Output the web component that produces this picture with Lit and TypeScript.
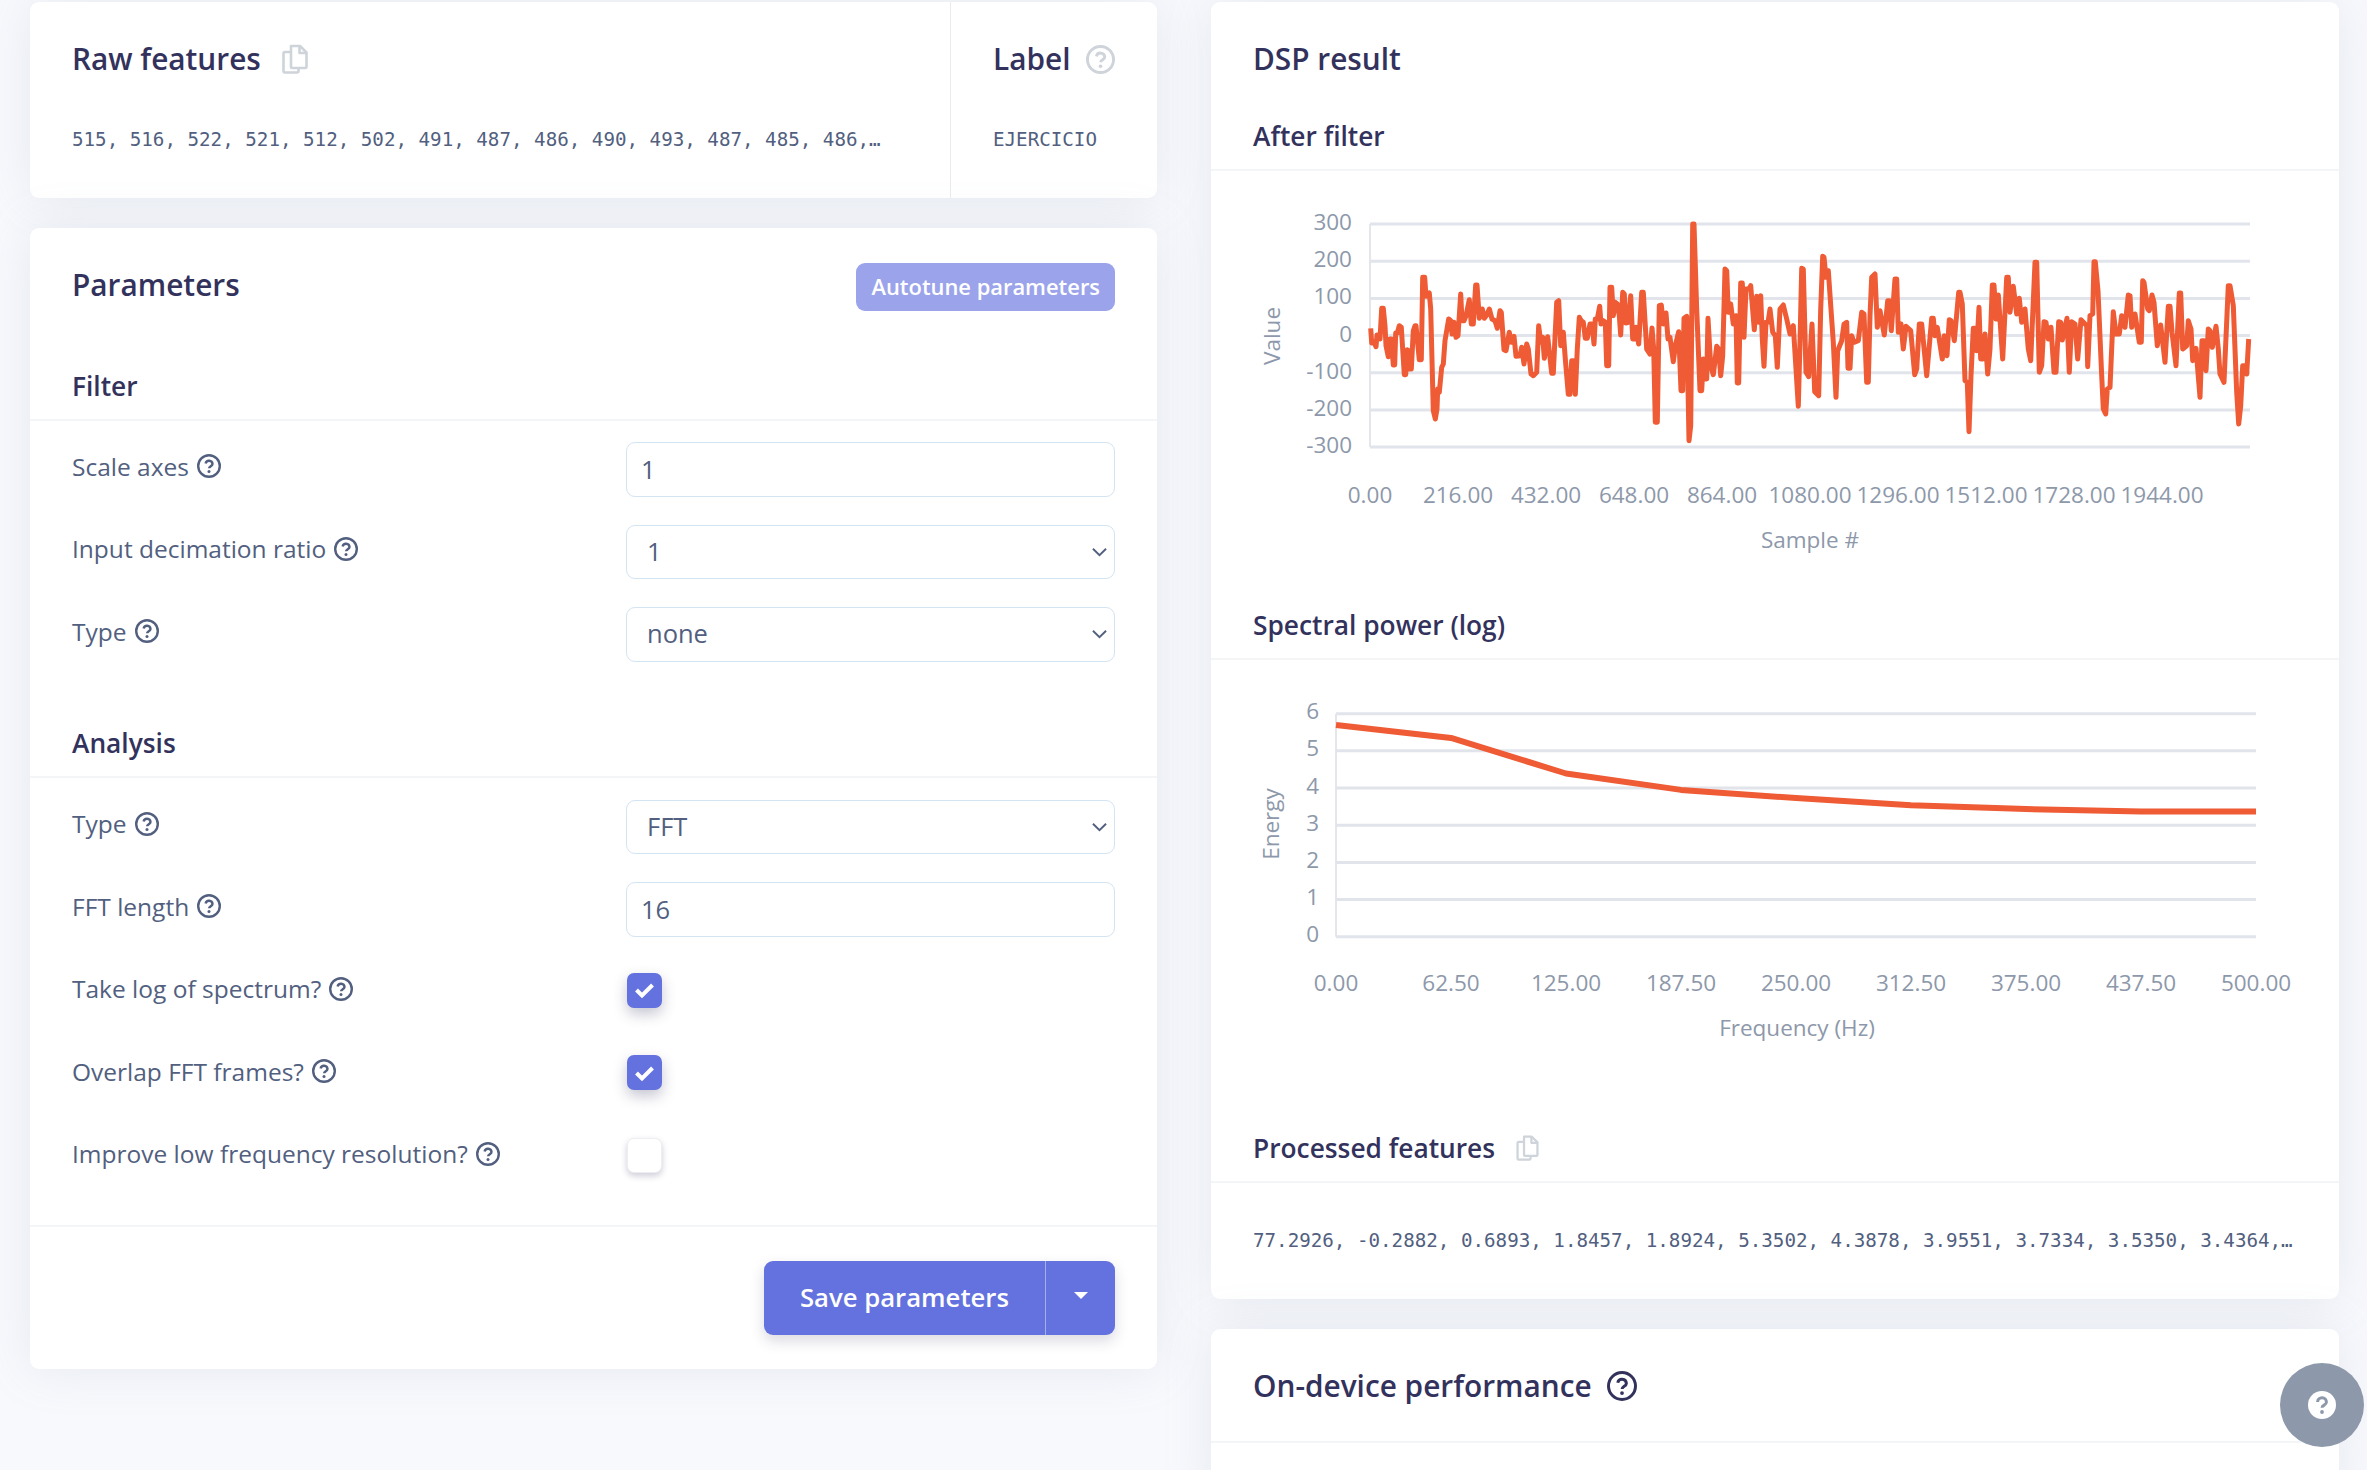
import { LitElement, html, css, svg } from "lit";
import { customElement } from "lit/decorators.js";

// traced off the reference, in page px relative to the 3x crops
const LEFT_TRACE = [
  92,358,95,402,102,398,108,413,111,378,118,378,120,390,125,298,130,298,135,350,138,410,145,443,150,390,154,390,160,468,164,468,167,372,172,372,178,350,184,355,193,497,197,497,202,422,206,425,210,480,214,480,220,365,225,350,228,350,238,452,244,452,248,205,254,205,258,262,268,252,272,300,280,605,286,630,291,600,293,540,298,550,305,475,310,465,315,395,326,330,332,335,336,375,342,340,348,385,354,380,362,255,366,335,372,335,378,320,388,272,394,345,400,345,407,228,411,228,418,328,427,300,433,328,440,318,448,300,456,330,465,335,472,358,480,305,484,310,492,422,498,425,508,370,514,400,522,382,528,442,540,440,545,415,552,465,560,405,565,420,573,495,580,500,590,490,596,350,602,400,608,385,613,448,623,383,635,493,640,493,650,280,656,275,662,410,670,370,676,450,685,556,690,556,695,455,700,455,706,556,712,420,718,325,724,335,730,340,736,388,742,388,750,345,756,345,762,405,766,330,772,330,779,292,783,345,790,335,796,340,800,470,806,470,810,235,815,235,820,320,826,280,832,285,838,320,842,378,848,250,853,255,857,342,865,340,872,260,878,390,886,390,888,355,896,405,905,250,910,250,920,420,930,435,936,357,941,420,946,640,952,640,958,290,964,288,970,345,978,312,984,390,990,385,1000,458,1007,405,1016,368,1023,545,1028,545,1032,328,1040,322,1047,695,1052,650,1058,45,1062,45,1070,300,1080,545,1085,545,1090,450,1096,510,1100,510,1104,328,1112,470,1120,497,1130,412,1136,420,1142,500,1148,440,1155,180,1160,185,1165,310,1172,285,1180,345,1188,320,1192,522,1196,522,1202,222,1207,222,1212,385,1218,240,1226,240,1232,230,1243,362,1250,262,1256,340,1262,260,1267,390,1272,472,1278,340,1284,340,1290,300,1298,370,1306,380,1312,475,1320,300,1330,288,1340,330,1350,375,1360,350,1375,592,1380,400,1385,178,1390,180,1398,490,1406,503,1416,345,1424,548,1436,560,1442,300,
];
const RIGHT_TRACE = [
  8,142,12,145,18,205,25,185,40,400,48,565,53,425,65,395,72,345,80,340,84,478,90,478,95,380,102,400,115,395,125,310,132,315,140,520,145,520,150,320,155,205,165,195,172,355,180,305,193,378,203,275,208,275,214,365,225,210,230,210,235,370,243,345,250,420,258,352,272,365,284,497,290,480,298,345,305,345,320,500,335,328,340,328,345,380,352,355,367,450,373,380,381,440,388,332,393,335,403,395,416,250,420,250,427,285,435,515,442,520,447,668,453,500,460,358,465,358,470,425,477,295,482,450,488,450,495,375,503,495,510,420,517,228,522,228,528,330,535,258,548,450,560,205,565,205,570,310,580,232,590,315,598,268,605,340,615,300,625,420,632,455,645,160,650,160,658,490,665,470,672,338,678,340,685,390,693,355,702,490,708,490,716,338,722,340,727,393,741,328,748,490,755,338,765,345,773,450,783,332,800,350,803,473,810,320,818,315,822,158,826,158,834,245,845,500,850,600,857,615,862,540,870,535,880,308,888,375,898,375,905,320,915,355,925,258,930,260,935,355,945,315,958,400,964,400,968,215,972,220,983,300,988,305,996,258,1002,280,1012,410,1022,348,1035,460,1045,292,1050,292,1056,370,1068,470,1078,252,1082,252,1088,420,1100,410,1105,335,1113,360,1118,455,1128,418,1140,565,1146,395,1152,395,1158,485,1165,360,1170,365,1177,415,1188,352,1195,420,1200,495,1212,520,1225,230,1230,230,1240,290,1250,550,1256,645,1262,590,1268,470,1273,470,1280,495,1286,390,
];

const CARD_X = 1211;

function toPoints(trace: number[], originX: number, originY: number) {
  const out: string[] = [];
  for (let i = 0; i < trace.length; i += 2) {
    out.push(`${(originX + trace[i] / 3 - CARD_X).toFixed(1)},${(originY + trace[i + 1] / 3).toFixed(1)}`);
  }
  return out.join(" ");
}

const filterLine =
  toPoints(LEFT_TRACE, 1340, 210 - 171) + " " + toPoints(RIGHT_TRACE, 1820, 210 - 171);

const helpIcon = (cls = "") => html`<svg class="help ${cls}" viewBox="0 0 24 24" fill="none" stroke="currentColor">
  <circle cx="12" cy="12" r="10.8" stroke-width="2.4"></circle>
  <path d="M8.6 9.4a3.5 3.5 0 0 1 6.9.5c0 2.2-3.4 2.3-3.4 4.4" stroke-width="2.4"></path>
  <circle cx="12" cy="17.6" r="1.5" fill="currentColor" stroke="none"></circle>
</svg>`;

const copyIcon = html`<svg class="copy" viewBox="0 0 26 30" fill="none" stroke="currentColor" stroke-width="2.6" stroke-linejoin="round">
  <path d="M9 2h9l6.5 6.5V23a1 1 0 0 1-1 1H10a1 1 0 0 1-1-1z"></path>
  <path d="M17.5 2v7h7"></path>
  <path d="M9 8H3a1.5 1.5 0 0 0-1.5 1.5V27a1.5 1.5 0 0 0 1.5 1.5h12a1.5 1.5 0 0 0 1.5-1.5v-3"></path>
</svg>`;

const chevron = html`<svg class="chevron" viewBox="0 0 16 10" fill="none" stroke="currentColor" stroke-width="2">
  <path d="M1 1.5l7 7 7-7"></path>
</svg>`;

@customElement("app-root")
export class AppRoot extends LitElement {
  static styles = css`
    :host {
      display: block;
      height: 1470px;
      overflow: hidden;
      position: relative;
      background: #f8f9fd;
      font-family: "Open Sans", sans-serif;
      color: #525f7f;
      font-size: 24.5px;
    }
    * {
      box-sizing: border-box;
    }
    .page {
      display: grid;
      grid-template-columns: 1127px 1128px;
      column-gap: 54px;
      padding: 2px 28px 0 30px;
      align-items: start;
    }
    .col {
      display: flex;
      flex-direction: column;
      gap: 30px;
    }
    .card {
      background: #fff;
      border-radius: 9px;
      box-shadow: 0 0 48px rgba(136, 152, 170, 0.17);
    }
    .title {
      display: flex;
      align-items: center;
      gap: 21px;
      margin: 0;
      padding: 37px 42px 24px;
      line-height: 40px;
      font-size: 29.8px;
      font-weight: 600;
      color: #32325d;
    }
    .mono {
      margin: 0;
      font-family: "DejaVu Sans Mono", monospace;
      font-size: 19.2px;
      line-height: 30px;
      white-space: nowrap;
      color: #525f7f;
    }
    .help {
      width: 24px;
      height: 24px;
      flex: none;
      color: #525f7f;
    }
    .help.muted {
      width: 29px;
      height: 29px;
      margin-left: -6px;
      color: #ced4da;
    }
    .help.dark {
      width: 30px;
      height: 30px;
      color: #32325d;
    }
    .copy {
      width: 26px;
      height: 30px;
      flex: none;
      color: #ced4da;
    }
    .section .copy {
      width: 23px;
      height: 26px;
    }

    .raw {
      display: grid;
      grid-template-columns: 920px 1fr;
      height: 196px;
    }
    .raw > div + div {
      border-left: 1px solid #e9ecef;
    }
    .raw .mono {
      padding: 46px 42px 0;
    }
    .raw .title {
      padding-bottom: 0;
    }

    .params-head {
      display: flex;
      justify-content: space-between;
      align-items: center;
      height: 114px;
      padding: 0 42px;
    }
    .params-head .title {
      padding: 0;
    }
    .autotune {
      height: 48px;
      padding: 0 15px 2px;
      border: 0;
      border-radius: 9px;
      background: #9ba4ea;
      color: #fff;
      font: 600 21.9px "Open Sans", sans-serif;
      margin-top: 4px;
    }
    .section {
      display: flex;
      align-items: center;
      gap: 21px;
      height: 68px;
      padding: 0 42px;
      border-bottom: 2px solid #f4f5f7;
      font-size: 26.3px;
      font-weight: 600;
      color: #32325d;
    }
    .section.form-first {
      height: 79px;
      padding-top: 10px;
    }
    .rows {
      display: flex;
      flex-direction: column;
      gap: 28px;
      padding: 21px 42px 0;
    }
    .rows.last {
      padding-top: 22px;
      padding-bottom: 41px;
    }
    .rows + .section {
      margin-top: 48px;
    }
    .row {
      display: grid;
      grid-template-columns: 554px 489px;
      align-items: center;
      height: 54.5px;
    }
    .label {
      display: flex;
      align-items: center;
      gap: 8px;
      padding-bottom: 6px;
    }
    .input,
    select.input {
      appearance: none;
      width: 100%;
      height: 54.5px;
      padding: 0 14px;
      border: 1.5px solid #d3e4f3;
      border-radius: 9px;
      background: #fff;
      color: #525f7f;
      font: 400 25.5px "Open Sans", sans-serif;
      outline: none;
    }
    select.input {
      padding: 0 20px 2px;
    }
    .select {
      position: relative;
      display: block;
    }
    .chevron {
      position: absolute;
      right: 8px;
      top: 22px;
      width: 15px;
      height: 10px;
      color: #525f7f;
    }
    .check {
      display: flex;
      align-items: center;
      justify-content: center;
      width: 35px;
      height: 35px;
      margin: -3px 0 0 1px;
      border-radius: 7px;
      background: #fff;
      border: 1px solid #eceef2;
      box-shadow: 0 3px 6px rgba(50, 50, 93, 0.24);
    }
    .check.on {
      background: #6372de;
      border: 0;
      box-shadow: 0 6px 14px rgba(50, 50, 93, 0.28);
    }
    .check svg {
      width: 21px;
      height: 18px;
    }
    .foot {
      display: flex;
      justify-content: flex-end;
      padding: 34px 42px 34px;
      border-top: 2px solid #f4f5f7;
    }
    .split {
      display: flex;
      height: 74px;
      border-radius: 9px;
      background: #6372de;
      box-shadow: 0 6px 14px rgba(50, 50, 93, 0.18);
      color: #fff;
    }
    .split span {
      display: flex;
      align-items: center;
      font-size: 25.7px;
      font-weight: 600;
      padding: 0 36px 2px;
      width: 281px;
      white-space: nowrap;
    }
    .split i {
      display: flex;
      align-items: center;
      justify-content: center;
      width: 70px;
      border-left: 1px solid #a5afec;
      padding-bottom: 5px;
    }
    .split i::after {
      content: "";
      border: 7px solid transparent;
      border-top: 7px solid #fff;
      border-bottom: 0;
    }

    .chart {
      display: block;
      width: 1128px;
    }
    .chart text {
      font-family: "Open Sans", sans-serif;
      font-size: 22.5px;
      fill: #8d98aa;
    }
    .grid {
      stroke: #e1e4ea;
      stroke-width: 3;
    }
    .axis {
      stroke: #e4e6ec;
      stroke-width: 2;
    }
    .line {
      fill: none;
      stroke: #ee5b35;
      stroke-linejoin: round;
    }
    .processed {
      height: 116px;
      padding: 43px 42px 0;
    }
    .perf {
      height: 114px;
      padding: 37px 42px 0;
      border-bottom: 2px solid #f4f5f7;
    }
    .perf .title {
      padding: 0;
      gap: 15px;
    }
    .perf-body {
      height: 60px;
    }
    .bubble {
      position: absolute;
      left: 2280px;
      top: 1363px;
      display: flex;
      align-items: center;
      justify-content: center;
      width: 84px;
      height: 84px;
      border-radius: 50%;
      background: #8d98aa;
    }
    .bubble svg {
      width: 28px;
      height: 28px;
    }
  `;

  private renderRow(label: string, control: unknown) {
    return html`<div class="row">
      <div class="label">${label}${helpIcon()}</div>
      ${control}
    </div>`;
  }

  private renderSelect(value: string) {
    return html`<label class="select">
      <select class="input"><option>${value}</option></select>
      ${chevron}
    </label>`;
  }

  private renderCheck(on: boolean) {
    return html`<div class="check ${on ? "on" : ""}">
      ${on
        ? html`<svg viewBox="0 0 21 18" fill="none" stroke="#fff" stroke-width="4"><path d="M2.5 9l5.5 5.5L18.5 4"></path></svg>`
        : ""}
    </div>`;
  }

  private renderFilterChart() {
    const ys = [54, 91.2, 128.4, 165.6, 202.8, 240, 277];
    const labels = ["300", "200", "100", "0", "-100", "-200", "-300"];
    const x0 = 1370 - CARD_X;
    const xLabels = ["0.00", "216.00", "432.00", "648.00", "864.00", "1080.00", "1296.00", "1512.00", "1728.00", "1944.00"];
    return html`<svg class="chart" height="421" viewBox="0 1 1128 421">
      ${svg`<line class="axis" x1=${x0} x2=${x0} y1="54" y2="277"></line>`}
      ${ys.map(
        (y, i) => svg`
          <line class="grid" x1=${x0} x2="1039" y1=${y} y2=${y}></line>
          <text x="141" y=${y - 2.5} text-anchor="end" dominant-baseline="central">${labels[i]}</text>`
      )}
      ${xLabels.map(
        (t, i) => svg`<text x=${x0 + i * 88} y="324" text-anchor="middle" dominant-baseline="central">${t}</text>`
      )}
      ${svg`
        <text x="599" y="369" text-anchor="middle" dominant-baseline="central">Sample #</text>
        <text transform="translate(60 166) rotate(-90)" text-anchor="middle" dominant-baseline="central">Value</text>
        <polyline class="line" stroke-width="5" points=${filterLine}></polyline>`}
    </svg>`;
  }

  private renderSpectrumChart() {
    const top = 54.7;
    const step = 37.17;
    const x0 = 1336 - CARD_X;
    const xStep = 115;
    const values = [5.7, 5.35, 4.39, 3.95, 3.73, 3.535, 3.436, 3.37, 3.37];
    const xLabels = ["0.00", "62.50", "125.00", "187.50", "250.00", "312.50", "375.00", "437.50", "500.00"];
    const pts = values
      .map((v, i) => `${x0 + i * xStep},${(top + (6 - v) * step).toFixed(1)}`)
      .join(" ");
    return html`<svg class="chart" height="455" viewBox="0 1 1128 455">
      ${svg`<line class="axis" x1=${x0} x2=${x0} y1=${top} y2=${top + 6 * step}></line>`}
      ${[6, 5, 4, 3, 2, 1, 0].map(
        (v, i) => svg`
          <line class="grid" x1=${x0} x2="1045" y1=${top + i * step} y2=${top + i * step}></line>
          <text x="108" y=${top + i * step - 3} text-anchor="end" dominant-baseline="central">${v}</text>`
      )}
      ${xLabels.map(
        (t, i) => svg`<text x=${x0 + i * xStep} y="323.5" text-anchor="middle" dominant-baseline="central">${t}</text>`
      )}
      ${svg`
        <text x="586" y="368.5" text-anchor="middle" dominant-baseline="central">Frequency (Hz)</text>
        <text transform="translate(59 165) rotate(-90)" text-anchor="middle" dominant-baseline="central">Energy</text>
        <polyline class="line" stroke-width="6" points=${pts}></polyline>`}
    </svg>`;
  }

  render() {
    return html`
      <div class="page">
        <div class="col">
          <section class="card raw">
            <div>
              <h3 class="title">Raw features ${copyIcon}</h3>
              <p class="mono">515, 516, 522, 521, 512, 502, 491, 487, 486, 490, 493, 487, 485, 486,…</p>
            </div>
            <div>
              <h3 class="title">Label ${helpIcon("muted")}</h3>
              <p class="mono">EJERCICIO</p>
            </div>
          </section>

          <section class="card">
            <div class="params-head">
              <h3 class="title">Parameters</h3>
              <button class="autotune">Autotune parameters</button>
            </div>
            <div class="section form-first">Filter</div>
            <div class="rows">
              ${this.renderRow("Scale axes", html`<input class="input" value="1" />`)}
              ${this.renderRow("Input decimation ratio", this.renderSelect("1"))}
              ${this.renderRow("Type", this.renderSelect("none"))}
            </div>
            <div class="section">Analysis</div>
            <div class="rows last">
              ${this.renderRow("Type", this.renderSelect("FFT"))}
              ${this.renderRow("FFT length", html`<input class="input" value="16" />`)}
              ${this.renderRow("Take log of spectrum?", this.renderCheck(true))}
              ${this.renderRow("Overlap FFT frames?", this.renderCheck(true))}
              ${this.renderRow("Improve low frequency resolution?", this.renderCheck(false))}
            </div>
            <div class="foot">
              <div class="split"><span>Save parameters</span><i></i></div>
            </div>
          </section>
        </div>

        <div class="col">
          <section class="card">
            <h3 class="title">DSP result</h3>
            <div class="section">After filter</div>
            ${this.renderFilterChart()}
            <div class="section">Spectral power (log)</div>
            ${this.renderSpectrumChart()}
            <div class="section">Processed features ${copyIcon}</div>
            <div class="processed">
              <p class="mono">77.2926, -0.2882, 0.6893, 1.8457, 1.8924, 5.3502, 4.3878, 3.9551, 3.7334, 3.5350, 3.4364,…</p>
            </div>
          </section>

          <section class="card">
            <div class="perf">
              <h3 class="title">On-device performance ${helpIcon("dark")}</h3>
            </div>
            <div class="perf-body"></div>
          </section>
        </div>
      </div>

      <div class="bubble">
        <svg viewBox="0 0 28 28">
          <circle cx="14" cy="14" r="14" fill="#fff"></circle>
          <path d="M9.6 11a4.4 4.4 0 0 1 8.8.3c0 2.8-4.4 2.8-4.4 5.4" fill="none" stroke="#8d98aa" stroke-width="3"></path>
          <circle cx="14" cy="21" r="1.9" fill="#8d98aa"></circle>
        </svg>
      </div>
    `;
  }
}
